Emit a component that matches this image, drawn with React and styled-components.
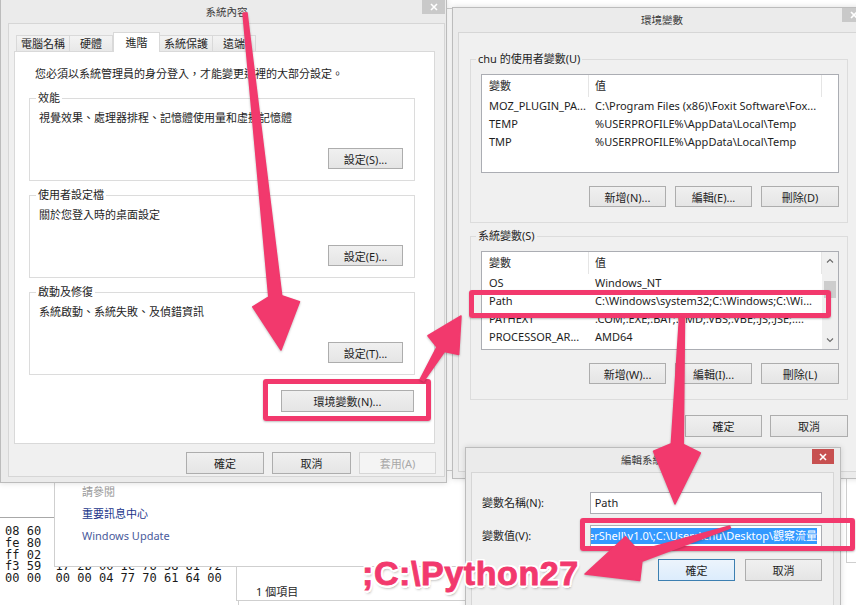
import React from 'react';
import styled, { createGlobalStyle } from 'styled-components';

const UI = `'Noto Sans', 'Noto Sans CJK TC', sans-serif`;
const PINK = '#f2396d';

const GlobalStyle = createGlobalStyle`
  * { box-sizing: border-box; }
  html, body { margin: 0; padding: 0; }
  body {
    background: #fff;
    font-family: ${UI};
    font-size: 11px;
    line-height: 16px;
    color: #1e1e1e;
  }
`;

const Desktop = styled.div`
  position: relative;
  width: 856px;
  height: 605px;
  overflow: hidden;
  background: #fff;
`;

/* ---------- window chrome ---------- */

const Win = styled.div`
  position: absolute;
  left: ${p => p.$x}px;
  top: ${p => p.$y}px;
  width: ${p => p.$w}px;
  height: ${p => p.$h}px;
  z-index: ${p => p.$z};
  display: flex;
  flex-direction: column;
  padding: 0 ${p => p.$pr}px ${p => p.$pb}px ${p => p.$pl}px;
  background: #ebebeb;
  border: 1px solid #bcbcbc;
  box-shadow: 0 0 6px rgba(0, 0, 0, 0.14);
`;

const TitleBar = styled.div`
  flex: none;
  height: ${p => p.$h}px;
  display: grid;
  grid-template-columns: 1fr auto 1fr;
  align-items: start;
`;

const TitleText = styled.div`
  grid-column: 2;
  align-self: center;
  font-size: 10.5px;
  color: #3a3a3a;
`;

const Close = styled.div`
  grid-column: 3;
  justify-self: end;
  margin-top: ${p => p.$mt || 0}px;
  width: ${p => p.$w}px;
  height: ${p => p.$h}px;
  display: flex;
  align-items: center;
  justify-content: center;
  background: ${p => (p.$active ? '#c75050' : '#c9c9c9')};
`;

const Client = styled.div`
  flex: 1;
  display: flex;
  flex-direction: column;
  min-height: 0;
  background: #f0f0f0;
  border: 1px solid #d6d6d6;
  padding: ${p => p.$pad};
`;

const CloseGlyph = () => (
  <svg width="8" height="8" viewBox="0 0 8 8">
    <path d="M1 1L7 7M7 1L1 7" stroke="#fff" strokeWidth="1.6" />
  </svg>
);

const Window = ({ x, y, w, h, z, pl, pr, pb, titleH, title, close, active, pad, children }) => (
  <Win $x={x} $y={y} $w={w} $h={h} $z={z} $pl={pl} $pr={pr} $pb={pb}>
    <TitleBar $h={titleH}>
      <TitleText>{title}</TitleText>
      <Close $w={close.w} $h={close.h} $mt={close.mt} $active={active}>
        <CloseGlyph />
      </Close>
    </TitleBar>
    <Client $pad={pad}>{children}</Client>
  </Win>
);

/* ---------- controls ---------- */

const Btn = styled.button`
  flex: none;
  width: ${p => p.$w}px;
  height: ${p => p.$h || 21}px;
  margin: 0;
  padding: 0;
  display: flex;
  align-items: center;
  justify-content: center;
  font-family: ${UI};
  font-size: 11px;
  color: ${p => (p.$disabled ? '#a8a8a8' : '#1e1e1e')};
  border: 1px solid ${p => (p.$focus ? '#3c7fb1' : p.$disabled ? '#d6d6d6' : '#adadad')};
  background: ${p =>
    p.$focus
      ? 'linear-gradient(#ecf4fc, #dcecfc)'
      : p.$disabled
      ? '#f4f4f4'
      : 'linear-gradient(#f0f0f0, #e5e5e5)'};
`;

const BtnRow = styled.div`
  display: flex;
  justify-content: flex-end;
  gap: ${p => p.$gap || 8}px;
  margin-top: ${p => p.$mt || 0}px;
  margin-right: ${p => p.$mr || 0}px;
`;

const Group = styled.fieldset`
  margin: ${p => p.$mt || 0}px 0 0;
  min-width: 0;
  border: 1px solid #dcdcdc;
  padding: 0 ${p => p.$pr}px ${p => p.$pb}px ${p => p.$pl}px;
`;

const Legend = styled.legend`
  padding: 0 2px;
  line-height: 16px;
`;

/* ---------- system properties window ---------- */

const Tabs = styled.div`
  position: relative;
  z-index: 1;
  display: flex;
  align-items: flex-end;
  height: 20px;
  margin-bottom: -1px;
  padding-left: 2px;
`;

const Tab = styled.div`
  width: ${p => p.$w}px;
  height: ${p => (p.$sel ? 20 : 17)}px;
  display: flex;
  align-items: center;
  justify-content: center;
  border: 1px solid #d9d9d9;
  border-bottom: ${p => (p.$sel ? 'none' : '1px solid #d9d9d9')};
  border-left-width: ${p => (p.$first || p.$sel ? 1 : 0)}px;
  background: ${p => (p.$sel ? '#fff' : 'linear-gradient(#f3f3f3, #e8e8e8)')};
`;

const TabPanel = styled.div`
  height: 393px;
  background: #fff;
  border: 1px solid #d9d9d9;
  padding: 14px 19px 0 14px;
  display: flex;
  flex-direction: column;
`;

const Intro = styled.div`
  padding-left: 6px;
`;

const GroupText = styled.div`
  margin-top: 4px;
  padding-left: 3px;
`;

const SettingsGroup = ({ mt, label, text, button }) => (
  <Group $mt={mt} $pl={6} $pr={11} $pb={11}>
    <Legend>{label}</Legend>
    <GroupText>{text}</GroupText>
    <BtnRow $mt={22}>
      <Btn $w={75}>{button}</Btn>
    </BtnRow>
  </Group>
);

/* ---------- list view ---------- */

const List = styled.div`
  height: 99px;
  margin: 7px 0 0 5px;
  display: flex;
  background: #fff;
  border: 1px solid #abadb3;
  overflow: hidden;
`;

const ListBody = styled.div`
  flex: 1;
  min-width: 0;
`;

const Cols = styled.div`
  display: grid;
  grid-template-columns: 107px 233px 1fr;
  height: ${p => (p.$head ? 22 : 18)}px;
  align-items: center;
  white-space: nowrap;
`;

const Cell = styled.div`
  height: 100%;
  display: flex;
  align-items: center;
  padding-left: ${p => p.$pl}px;
  overflow: hidden;
  border-right: ${p => (p.$sep ? '1px solid #e5e5e5' : 'none')};
`;

const Scroll = styled.div`
  width: 16px;
  flex: none;
  display: flex;
  flex-direction: column;
  align-items: center;
  background: #f0f0f0;
`;

const ScrollArrow = styled.div`
  height: 17px;
  display: flex;
  align-items: center;
  justify-content: center;
`;

const Thumb = styled.div`
  width: 12px;
  height: 17px;
  margin-top: 12px;
  margin-bottom: auto;
  background: #cdcdcd;
`;

const Chevron = ({ up }) => (
  <svg width="8" height="5" viewBox="0 0 8 5">
    <path d={up ? 'M1 4.5L4 1.5L7 4.5' : 'M1 0.5L4 3.5L7 0.5'} fill="none" stroke="#6a6a6a" strokeWidth="1.1" />
  </svg>
);

const VarList = ({ rows, scroll }) => (
  <List>
    <ListBody>
      <Cols $head>
        <Cell $pl={7} $sep>變數</Cell>
        <Cell $pl={6} $sep>值</Cell>
        <Cell />
      </Cols>
      {rows.map(([k, v]) => (
        <Cols key={k}>
          <Cell $pl={7}>{k}</Cell>
          <Cell $pl={6}>{v}</Cell>
          <Cell />
        </Cols>
      ))}
    </ListBody>
    {scroll && (
      <Scroll>
        <ScrollArrow><Chevron up /></ScrollArrow>
        <Thumb />
        <ScrollArrow><Chevron /></ScrollArrow>
      </Scroll>
    )}
  </List>
);

/* ---------- edit dialog ---------- */

const FieldRow = styled.div`
  display: flex;
  align-items: center;
  height: 22px;
  margin-top: ${p => p.$mt || 0}px;
`;

const FieldLabel = styled.div`
  width: 108px;
`;

const Field = styled.div`
  width: 233px;
  height: 22px;
  display: flex;
  align-items: center;
  justify-content: ${p => (p.$end ? 'flex-end' : 'flex-start')};
  padding: 0 4px;
  background: #fff;
  border: 1px solid #abadb3;
  overflow: hidden;
  white-space: nowrap;
`;

const Selected = styled.span`
  flex: none;
  background: #3399ff;
  color: #fff;
  line-height: 16px;
`;

/* ---------- background windows ---------- */

const BgPanel = styled.div`
  position: absolute;
  left: ${p => p.$x}px;
  top: ${p => p.$y}px;
  width: ${p => p.$w}px;
  height: ${p => p.$h}px;
  z-index: ${p => p.$z};
  background: #fff;
  border: 1px solid #cfcfcf;
  border-top-color: ${p => p.$top || '#cfcfcf'};
  padding: ${p => p.$pad || 0};
`;

const LinkList = styled.div`
  display: flex;
  flex-direction: column;
  line-height: 22px;
`;

const Link = styled.div`
  color: ${p => p.$c};
`;

const Hex = styled.pre`
  margin: 0;
  font-family: 'DejaVu Sans Mono', monospace;
  font-size: 12px;
  line-height: 11.75px;
  color: #1a1a1a;
`;

/* ---------- annotations ---------- */

const Highlight = styled.div`
  position: absolute;
  left: ${p => p.$x}px;
  top: ${p => p.$y}px;
  width: ${p => p.$w}px;
  height: ${p => p.$h}px;
  z-index: 20;
  border: 5px solid ${PINK};
  border-radius: 3px;
  box-shadow: 0 1px 2px rgba(0, 0, 0, 0.25);
`;

const Overlay = styled.svg`
  position: absolute;
  left: 0;
  top: 0;
  z-index: 21;
  pointer-events: none;
  filter: drop-shadow(0 1px 1px rgba(0, 0, 0, 0.25));
`;

const Note = styled.div`
  position: absolute;
  left: 362px;
  top: 556px;
  z-index: 22;
  font-family: 'Liberation Sans', Arial, sans-serif;
  font-weight: 700;
  font-size: 34px;
  line-height: 34px;
  letter-spacing: 0.6px;
  color: ${PINK};
  -webkit-text-stroke: 0.9px ${PINK};
  text-shadow:
    2.5px 0 0 #fff, -2.5px 0 0 #fff, 0 2.5px 0 #fff, 0 -2.5px 0 #fff,
    1.8px 1.8px 0 #fff, -1.8px 1.8px 0 #fff, 1.8px -1.8px 0 #fff, -1.8px -1.8px 0 #fff,
    1px 3px 3px rgba(0, 0, 0, 0.45);
`;

const arrowPoints = ([x1, y1], [x2, y2], { tail, neck, len, width, back }) => {
  const L = Math.hypot(x2 - x1, y2 - y1);
  const ux = (x2 - x1) / L;
  const uy = (y2 - y1) / L;
  const nx = -uy;
  const ny = ux;
  const bx = x2 - ux * len;
  const by = y2 - uy * len;
  const jx = bx - ux * back;
  const jy = by - uy * back;
  const pt = (x, y) => `${x.toFixed(1)},${y.toFixed(1)}`;
  return [
    pt(x1 + (nx * tail) / 2, y1 + (ny * tail) / 2),
    pt(jx + (nx * neck) / 2, jy + (ny * neck) / 2),
    pt(bx + (nx * width) / 2, by + (ny * width) / 2),
    pt(x2, y2),
    pt(bx - (nx * width) / 2, by - (ny * width) / 2),
    pt(jx - (nx * neck) / 2, jy - (ny * neck) / 2),
    pt(x1 - (nx * tail) / 2, y1 - (ny * tail) / 2),
  ].join(' ');
};

const arrows = [
  { from: [245, 13], to: [281, 350], tail: 4, neck: 13, len: 46, width: 47, back: 8 },
  { from: [422, 380], to: [461, 316], tail: 4, neck: 9, len: 34, width: 36, back: 5 },
  { from: [682, 318], to: [675, 504], tail: 5, neck: 12, len: 52, width: 47, back: 8 },
  { from: [730, 527], to: [585, 574], tail: 2, neck: 11, len: 50, width: 46, back: 8 },
];

const userVars = [
  ['MOZ_PLUGIN_PA...', 'C:\\Program Files (x86)\\Foxit Software\\Fox...'],
  ['TEMP', '%USERPROFILE%\\AppData\\Local\\Temp'],
  ['TMP', '%USERPROFILE%\\AppData\\Local\\Temp'],
];

const sysVars = [
  ['OS', 'Windows_NT'],
  ['Path', 'C:\\Windows\\system32;C:\\Windows;C:\\Wi...'],
  ['PATHEXT', '.COM;.EXE;.BAT;.CMD;.VBS;.VBE;.JS;.JSE;....'],
  ['PROCESSOR_AR...', 'AMD64'],
  ['PROCESSOR_ID...', 'Intel64 Family 6 Model 58'],
];

const hexRows = `08 60
fe 80
ff 02
f3 59  17 2b 00 1c 76 58 61 72
00 00  00 00 04 77 70 61 64 00`;

export default function App() {
  return (
    <Desktop>
      <GlobalStyle />

      <BgPanel $x={446} $y={-12} $w={420} $h={21} $z={0} />
      <BgPanel $x={846} $y={470} $w={20} $h={93} $z={0} />
      <BgPanel $x={54} $y={470} $w={430} $h={97} $z={2} $pad="10px 0 0 27px">
        <LinkList>
          <Link $c="#9a9a9a">請參閱</Link>
          <Link $c="#22358a">重要訊息中心</Link>
          <Link $c="#4a5b9c">Windows Update</Link>
        </LinkList>
      </BgPanel>
      <BgPanel $x={-1} $y={517} $w={240} $h={100} $z={1} $top="#a8a8a8" $pad="8px 0 0 5px">
        <Hex>{hexRows}</Hex>
      </BgPanel>
      <BgPanel $x={236} $y={566} $w={240} $h={35} $z={1} $pad="17px 0 0 19px">
        1 個項目
      </BgPanel>

      <Window
        x={0} y={-1} w={447} h={484} z={3}
        pl={7} pr={1} pb={5} titleH={23}
        title="系統內容" close={{ w: 23, h: 14, mt: 0 }}
        pad="8px 9px 0 5px"
      >
        <Tabs>
          <Tab $w={54} $first>電腦名稱</Tab>
          <Tab $w={43}>硬體</Tab>
          <Tab $w={47} $sel>進階</Tab>
          <Tab $w={53}>系統保護</Tab>
          <Tab $w={43}>遠端</Tab>
        </Tabs>
        <TabPanel>
          <Intro>您必須以系統管理員的身分登入，才能變更這裡的大部分設定。</Intro>
          <SettingsGroup mt={8} label="效能" text="視覺效果、處理器排程、記憶體使用量和虛擬記憶體" button="設定(S)..." />
          <SettingsGroup mt={6} label="使用者設定檔" text="關於您登入時的桌面設定" button="設定(E)..." />
          <SettingsGroup mt={6} label="啟動及修復" text="系統啟動、系統失敗、及偵錯資訊" button="設定(T)..." />
          <BtnRow $mt={15} $mr={1}>
            <Btn $w={133} $h={22}>環境變數(N)...</Btn>
          </BtnRow>
        </TabPanel>
        <BtnRow $mt={8} $mr={-1}>
          <Btn $w={78} $h={22}>確定</Btn>
          <Btn $w={79} $h={22}>取消</Btn>
          <Btn $w={77} $h={22} $disabled>套用(A)</Btn>
        </BtnRow>
      </Window>

      <Window
        x={452} y={7} w={420} h={472} z={4}
        pl={5} pr={5} pb={6} titleH={24}
        title="環境變數" close={{ w: 24, h: 14, mt: 0 }}
        pad="18px 17px 0 11px"
      >
        <Group $pl={5} $pr={8} $pb={15}>
          <Legend>chu 的使用者變數(U)</Legend>
          <VarList rows={userVars} />
          <BtnRow $mt={13} $gap={9}>
            <Btn $w={77}>新增(N)...</Btn>
            <Btn $w={77}>編輯(E)...</Btn>
            <Btn $w={78}>刪除(D)</Btn>
          </BtnRow>
        </Group>
        <Group $mt={5} $pl={5} $pr={8} $pb={15}>
          <Legend>系統變數(S)</Legend>
          <VarList rows={sysVars} scroll />
          <BtnRow $mt={13} $gap={9}>
            <Btn $w={77}>新增(W)...</Btn>
            <Btn $w={77}>編輯(I)...</Btn>
            <Btn $w={78}>刪除(L)</Btn>
          </BtnRow>
        </Group>
        <BtnRow $mt={15}>
          <Btn $w={77} $h={22}>確定</Btn>
          <Btn $w={78} $h={22}>取消</Btn>
        </BtnRow>
      </Window>

      <Window
        x={465} y={447} w={376} h={170} z={5}
        pl={5} pr={6} pb={6} titleH={24}
        title="編輯系統變數" close={{ w: 22, h: 15, mt: 1 }} active
        pad="19px 11px 0 10px"
      >
        <FieldRow>
          <FieldLabel>變數名稱(N):</FieldLabel>
          <Field>Path</Field>
        </FieldRow>
        <FieldRow $mt={11}>
          <FieldLabel>變數值(V):</FieldLabel>
          <Field $end>
            <Selected>werShell\v1.0\;C:\Users\chu\Desktop\觀察流量</Selected>
          </Field>
        </FieldRow>
        <BtnRow $mt={12} $gap={10}>
          <Btn $w={77} $h={22} $focus>確定</Btn>
          <Btn $w={77} $h={22}>取消</Btn>
        </BtnRow>
      </Window>

      <Highlight $x={263} $y={379} $w={168} $h={42} />
      <Highlight $x={469} $y={290} $w={362} $h={28} />
      <Highlight $x={580} $y={518} $w={275} $h={33} />

      <Overlay width="856" height="605" viewBox="0 0 856 605">
        {arrows.map(a => (
          <polygon
            key={a.to.join()}
            points={arrowPoints(a.from, a.to, a)}
            fill={PINK}
            stroke={PINK}
            strokeWidth="1.5"
            strokeLinejoin="round"
          />
        ))}
      </Overlay>

      <Note>;C:\Python27</Note>
    </Desktop>
  );
}
